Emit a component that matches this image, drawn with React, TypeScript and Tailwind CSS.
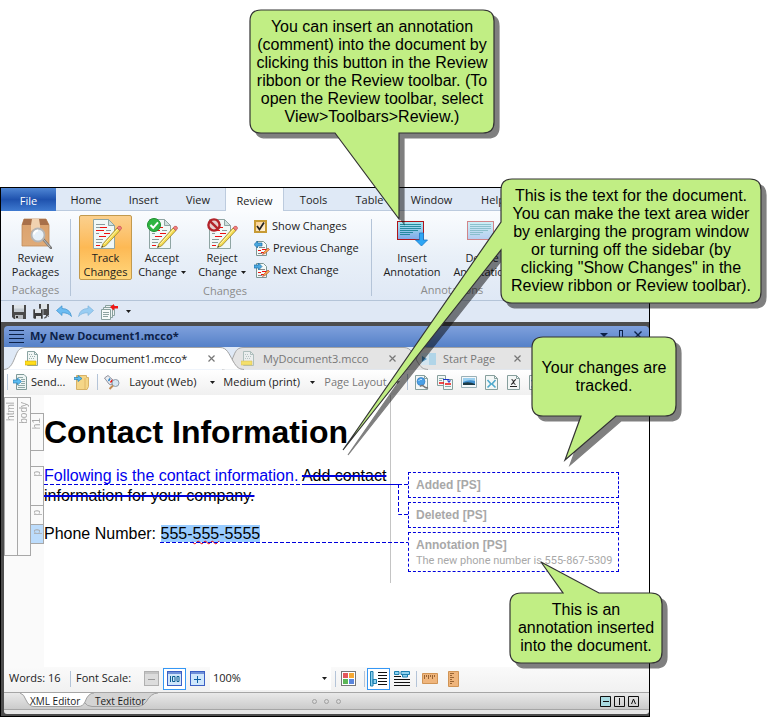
import React from "react";

type Kids = { children?: React.ReactNode };

const ui = "font-['Open_Sans','Noto_Sans',sans-serif]";
const arial = "font-['Liberation_Sans',Arial,sans-serif]";

/* ---------- icons ---------- */

function Caret({ className = "" }: { className?: string }) {
  return (
    <svg width="5" height="3" viewBox="0 0 5 3" className={className} aria-hidden="true">
      <path d="M0 0H5L2.5 3Z" fill="currentColor" />
    </svg>
  );
}

function PackageIcon() {
  return (
    <svg width="32" height="32" viewBox="0 0 32 32" aria-hidden="true">
      <defs>
        <linearGradient id="box" x1="0" y1="0" x2="0" y2="1">
          <stop offset="0" stopColor="#d9a06c" />
          <stop offset="1" stopColor="#e0ab78" />
        </linearGradient>
      </defs>
      <path d="M4 2H26L29 8V29H2V8Z" fill="url(#box)" stroke="#c08a58" strokeWidth=".8" />
      <path d="M4 2H26L29 8H2Z" fill="#a8704a" />
      <path d="M12 2H19L20 8V14L18 12.500L15.500 14L13 12.500L11 14V8Z" fill="#f1d2b0" />
      <path d="M23 22L31 31" stroke="#777" strokeWidth="2.600" strokeLinecap="round" />
      <path d="M23 22L30 30" stroke="#c4c4c4" strokeWidth="1" strokeLinecap="round" />
      <circle cx="18" cy="18" r="6.500" fill="#e6f0f9" stroke="#b4b4b4" strokeWidth="1.800" />
      <path d="M14 17.500A4.500 4.500 0 0 1 18 13.500" fill="none" stroke="#fff" strokeWidth="2" />
    </svg>
  );
}

function EditPage({ badge }: { badge?: "ok" | "no" }) {
  return (
    <svg width="32" height="32" viewBox="0 0 32 32" aria-hidden="true">
      <path d="M3.500 2.500H18.500L24.500 8.500V31.500H3.500Z" fill="#f1f8f7" stroke="#8fa5a3" />
      <path d="M18.500 2.500V8.500H24.500Z" fill="#cfe0de" stroke="#8fa5a3" />
      <path d="M6 7.500H15M6 10.500H12M16 13.500H21M6 16.500H9M6 22.500H13M6 25.500H12" stroke="#8b9a9a" />
      <path d="M6 13.500H14M14 16.500H20M10 10.500H17M6 28.500H10M9 19.500H16" stroke="#ee1010" strokeWidth="1.200" />
      <path d="M11.500 30.500L13 26.800L27 11L30 13.500L15.500 29Z" fill="#f5dc4e" stroke="#8a7424" strokeWidth=".7" />
      <path d="M14.300 27L28 12" stroke="#fff6b8" strokeWidth="1" />
      <path d="M27 11L28.500 9.300Q31 8.500 31.700 11.200L30 13.500Z" fill="#f08080" stroke="#b44" strokeWidth=".6" />
      <path d="M11.500 30.500L12.100 28.800L13.200 29.800Z" fill="#333" />
      {badge === "ok" && (
        <g>
          <circle cx="8" cy="8" r="6.500" fill="#2fb541" stroke="#1a8f2d" />
          <path d="M4.500 8L7.200 10.800L12 5.300" fill="none" stroke="#fff" strokeWidth="2" />
        </g>
      )}
      {badge === "no" && (
        <g>
          <circle cx="8" cy="8" r="5.600" fill="#e6cdcd" stroke="#b3232a" strokeWidth="2.400" />
          <path d="M4 4.200L12 11.800" stroke="#b3232a" strokeWidth="2.400" />
        </g>
      )}
    </svg>
  );
}

function SmallChange({ next = false }: { next?: boolean }) {
  return (
    <svg width="16" height="16" viewBox="0 0 16 16" aria-hidden="true">
      <path d="M2.500 1.500H9.500L12.500 4.500V15.500H2.500Z" fill="#f4f9f8" stroke="#7c9593" />
      <path d="M5 7.500H11M4 13.500H8" stroke="#888" />
      <path d="M4 10.500H7M8 9.500H12M7 12.500H10" stroke="#e11" strokeWidth="1.200" />
      <path d="M8.500 14.500L9.500 12.500L14 8L15.500 9.500L11 13.500Z" fill="#f3b04a" stroke="#b8342a" strokeWidth=".6" />
      <path
        d={next ? "M8 4.500L4.500 1V3H0V6H4.500V8Z" : "M0 4.500L3.500 1V3H8V6H3.500V8Z"}
        fill="#4aa8e0"
        stroke="#1b6fa8"
        strokeWidth=".7"
      />
    </svg>
  );
}

function AnnotationIcon({ faded = false }: { faded?: boolean }) {
  return (
    <svg width="32" height="32" viewBox="0 0 32 32" className={faded ? "opacity-50" : ""} aria-hidden="true">
      <defs>
        <linearGradient id="note" x1="0" y1="0" x2="0" y2="1">
          <stop offset="0" stopColor="#a8e8f2" />
          <stop offset="1" stopColor="#7fa8e8" />
        </linearGradient>
      </defs>
      <rect x="1.500" y="4.500" width="26" height="18" fill="url(#note)" stroke="#b0141a" />
      <path d="M4 7.500H25M4 9.500H25M4 11.500H25M4 13.500H22M4 15.500H17M4 17.500H14" stroke="#1b8296" strokeWidth=".9" />
      {!faded && <path d="M23.500 16H27.500V23H31.500L25.500 29L19.500 23H23.500Z" fill="#2ea6f5" stroke="#1b78c8" strokeWidth=".8" />}
    </svg>
  );
}

function Floppy() {
  return (
    <svg width="14" height="14" viewBox="0 0 14 14" aria-hidden="true">
      <path d="M0 0H14V14H2L0 12Z" fill="#4a4a4a" />
      <path d="M2 0H12V7H2Z" fill="#dfe4e8" />
      <path d="M2 3.500H12V7H2Z" fill="#c3cad0" />
      <path d="M3 10H11V14H3Z" fill="#b8bcc0" />
      <path d="M4 11H6V13H4Z" fill="#333" />
    </svg>
  );
}

function FloppyStack() {
  return (
    <svg width="17" height="16" viewBox="0 0 17 16" aria-hidden="true">
      <path d="M6 0H16V11H6Z" fill="#4a4a4a" />
      <path d="M8 0H14V5H8Z" fill="#dfe4e8" />
      <path d="M0 5H10V15H1L0 14Z" fill="#3c3c3c" stroke="#dfe9f5" strokeWidth=".6" />
      <path d="M2 5H8V9H2ZM3 12H8V15H3Z" fill="#dfe4e8" />
      <path d="M11 14Q14 14 14 12M12.500 12.500L14 11L16 12.500" fill="none" stroke="#444" />
    </svg>
  );
}

function Arrow({ flip = false }: { flip?: boolean }) {
  return (
    <svg width="16" height="13" viewBox="0 0 16 13" className={flip ? "-scale-x-100 opacity-60" : ""} aria-hidden="true">
      <path d="M0.500 5.500L6 0.800V3.500Q14 3.500 15.500 11.500Q12 7.500 6 7.800V10.500Z" fill="#6cbcf2" stroke="#3b8fcc" strokeWidth=".7" />
    </svg>
  );
}

function TransferIcon() {
  return (
    <svg width="17" height="16" viewBox="0 0 17 16" aria-hidden="true">
      <path d="M4.500 1.500H13.500V11.500H4.500Z" fill="#eef3f3" stroke="#8aa19f" />
      <path d="M2.500 3.500H11.500V13.500H2.500Z" fill="#eef3f3" stroke="#8aa19f" />
      <path d="M.5 5.500H9.500V15.500H.5Z" fill="#f7faf9" stroke="#8aa19f" />
      <path d="M2 8.500H8M2 10.500H8M2 12.500H7" stroke="#8fa3a1" />
      <path d="M9 3L13 0V2H17V4.500H13V6.500Z" fill="#f01616" />
    </svg>
  );
}

function DocIcon({ faded = false }: { faded?: boolean }) {
  return (
    <svg width="13" height="16" viewBox="0 0 13 16" className={faded ? "opacity-60" : ""} aria-hidden="true">
      <path d="M2.500 .5H9.500L12.500 3.500V14.500H2.500Z" fill="#f1f6f5" stroke="#8ba5a3" />
      <path d="M9.500 .5V3.500H12.500" fill="none" stroke="#8ba5a3" />
      <path d="M4 3.500H8M5 5.500H11M4 7.500H10" stroke="#9bb0ae" strokeDasharray="1 1" />
      <path d="M0 10H11V14H0Z" fill="#ffdf1b" stroke="#d2a90b" strokeWidth=".6" />
    </svg>
  );
}

function StartIcon() {
  return (
    <svg width="15" height="14" viewBox="0 0 15 14" className="opacity-80" aria-hidden="true">
      <path d="M0 1H15V13H0Z" fill="#a5d2ea" />
      <path d="M0 1H8V13H0Z" fill="#cfe6f3" />
      <path d="M1 4L6 7L1 10Z" fill="#2d7fb8" />
    </svg>
  );
}

function SendIcon() {
  return (
    <svg width="14" height="16" viewBox="0 0 14 16" aria-hidden="true">
      <path d="M3.500 .5H11L13.500 3V15.500H3.500Z" fill="#eef5f4" stroke="#7f9a98" />
      <path d="M5 3.500H10M8 5.500H12M9 7.500H12M8 9.500H12M5 11.500H12M5 13.500H12" stroke="#8fa8a6" />
      <path d="M0 6H4.500V4L8.500 7.500L4.500 11V9H0Z" fill="#5bbcf0" stroke="#2a80b5" strokeWidth=".7" />
    </svg>
  );
}

function FolderIcon() {
  return (
    <svg width="15" height="16" viewBox="0 0 15 16" aria-hidden="true">
      <path d="M2.500 1.500H12.500V3.500H14.500V12.500L13 15.500H2.500Z" fill="#f5d687" stroke="#d8b266" />
      <path d="M11 4V15" stroke="#e0b766" />
      <path d="M0 3.500H4V1.500L8 4.500L4 7.500V5.500H0Z" fill="#5bbcf0" stroke="#2a80b5" strokeWidth=".7" />
    </svg>
  );
}

function InspectIcon() {
  return (
    <svg width="16" height="15" viewBox="0 0 16 15" aria-hidden="true">
      <path d="M.5 3L4 .5L10 6L7 10L5 9Z" fill="#e9eef2" stroke="#667" strokeWidth=".7" />
      <path d="M4.500 6L6 3.500" stroke="#3587c8" strokeWidth="1.500" />
      <path d="M6.500 7.500L8.500 5" stroke="#e11" strokeWidth="1.500" />
      <circle cx="11.500" cy="8" r="3.500" fill="#d6e6f2" stroke="#8d9aa8" />
      <path d="M9 10.500L5.500 14" stroke="#c08a52" strokeWidth="2" />
    </svg>
  );
}

function PageTool({ kind }: { kind: "link" | "copy" | "picture" | "cut" | "variable" }) {
  if (kind === "picture")
    return (
      <svg width="16" height="12" viewBox="0 0 16 12" aria-hidden="true">
        <path d="M.5 .5H15.500V11.500H.5Z" fill="#f4f8fa" stroke="#9ab0b6" />
        <path d="M2 2H14V8H2Z" fill="#3f8fd0" />
        <path d="M2 2H14V5Q8 3 2 6Z" fill="#9cd0ef" />
        <path d="M2 8V7Q8 5 14 8V9H2Z" fill="#1d3a45" />
      </svg>
    );
  if (kind === "copy")
    return (
      <svg width="16" height="15" viewBox="0 0 16 15" aria-hidden="true">
        <path d="M.5 .5H8.500V10.500H.5Z" fill="#f3f7f6" stroke="#869f9d" />
        <path d="M6.500 4.500H15.500V14.500H6.500Z" fill="#f3f7f6" stroke="#869f9d" />
        <path d="M2 3.500H7M2 5.500H5M8 11.500H14" stroke="#8aa" />
        <path d="M2 8H7M8 9H14" stroke="#e11" strokeWidth="1.600" />
        <path d="M6 4.500H12V7M10.500 5.500L12 7.500L13.500 5.500" fill="none" stroke="#1833c8" />
      </svg>
    );
  return (
    <svg width="14" height="15" viewBox="0 0 14 15" aria-hidden="true">
      <path d="M.5 .5H9.500L12.500 3.500V14.500H.5Z" fill="#f3f7f6" stroke="#869f9d" />
      <path d="M9.500 .5V3.500H12.500" fill="none" stroke="#869f9d" />
      {kind === "link" && (
        <g>
          <circle cx="6" cy="6.500" r="4" fill="#4aa0e6" stroke="#2c72b8" strokeWidth=".6" />
          <path d="M3.500 6Q5 3.500 7 4.500" stroke="#c4e8ff" fill="none" />
          <path d="M5 11.500Q7 9.500 9 11.500T13 12.500" fill="none" stroke="#777" strokeWidth="1.600" />
        </g>
      )}
      {kind === "cut" && <path d="M2.500 5L6 9L2.500 12.500M10.500 5L7 9L10.500 12.500M5 9H8" fill="none" stroke="#4fa9cc" strokeWidth="1.600" />}
      {kind === "variable" && (
        <path d="M4.500 4.500Q6 4.500 6.500 7T8.500 9.500M9 4.500Q7.500 5 6.500 7T4 9.500M3 11.500H10" fill="none" stroke="#222" strokeWidth="1.100" />
      )}
    </svg>
  );
}

function ScaleIcon({ kind }: { kind: "minus" | "full" | "plus" }) {
  const off = kind === "minus";
  return (
    <svg width="15" height="15" viewBox="0 0 15 15" aria-hidden="true">
      <rect x=".5" y=".5" width="14" height="14" fill={off ? "#dcdcdc" : "#cfe6fb"} stroke={off ? "#b0b0b0" : "#3b5fc4"} />
      <path d="M1 1H14V3H1Z" fill={off ? "#c4c4c4" : "#6f90d8"} />
      {kind !== "full" && <path d="M4 8.500H11" stroke={off ? "#999" : "#0e5fa0"} />}
      {kind === "plus" && <path d="M7.500 5V12" stroke="#0e5fa0" />}
      {kind === "full" && <path d="M3.500 5V11M5.500 5.500H8V10.500H5.500ZM10 5.500H12V10.500H10Z" fill="none" stroke="#0e5f90" />}
    </svg>
  );
}

function GridIcon() {
  return (
    <svg width="15" height="15" viewBox="0 0 15 15" aria-hidden="true">
      <rect x=".5" y=".5" width="14" height="14" fill="#fff" stroke="#777" />
      <path d="M2 2H7V7H2Z" fill="#e4575b" />
      <path d="M8 2H13V7H8Z" fill="#f6a832" />
      <path d="M2 8H7V13H2Z" fill="#5cb656" />
      <path d="M8 8H13V13H8Z" fill="#5a86dd" />
    </svg>
  );
}

function BlockBars({ side = false }: { side?: boolean }) {
  return side ? (
    <svg width="17" height="16" viewBox="0 0 17 16" aria-hidden="true">
      <path d="M.5 .5H3V15H.5ZM3 8.500H6.500V12.500H3Z" fill="#8fd2ee" stroke="#1d7fae" />
      <path d="M8 1.500H17M8 4.500H17M8 7.500H17M8 10.500H17M8 13.500H17" stroke="#111" />
    </svg>
  ) : (
    <svg width="16" height="16" viewBox="0 0 16 16" aria-hidden="true">
      <path d="M.5 .5H5V3.500H.5ZM7 .5H15.500V3.500H7ZM8.500 3.500H13.500V6H8.500Z" fill="#8fd2ee" stroke="#1d7fae" />
      <path d="M0 5.500H7M0 8.500H16M0 11.500H16M0 14.500H16" stroke="#111" />
    </svg>
  );
}

function Ruler({ tall = false }: { tall?: boolean }) {
  return tall ? (
    <svg width="11" height="16" viewBox="0 0 11 16" aria-hidden="true">
      <path d="M.5 .5H10.500V15.500H.5Z" fill="#efb57c" stroke="#d09455" />
      <path d="M2 2.500H6M2 4.500H4M2 6.500H6M2 8.500H4M2 10.500H6M2 12.500H4" stroke="#8f5a2a" strokeWidth=".9" />
    </svg>
  ) : (
    <svg width="16" height="11" viewBox="0 0 16 11" aria-hidden="true">
      <path d="M.5 .5H15.500V10.500H.5Z" fill="#efb57c" stroke="#d09455" />
      <path d="M2.500 2V6M4.500 2V4M6.500 2V6M8.500 2V4M10.500 2V6M12.500 2V4" stroke="#8f5a2a" strokeWidth=".9" />
    </svg>
  );
}

/* ---------- ribbon ---------- */

function BigButton({ icon, top, bottom, menu, className = "" }: { icon: React.ReactNode; top: string; bottom: string; menu?: boolean; className?: string }) {
  return (
    <button className={`flex h-[65px] shrink-0 flex-col items-center border pt-[1px] leading-[14px] ${className}`}>
      {icon}
      <span className="mt-[2px]">{top}</span>
      <span className="flex items-center gap-1 whitespace-nowrap">
        {bottom}
        {menu && <Caret className="mt-px" />}
      </span>
    </button>
  );
}

function Group({ label, children, className = "" }: Kids & { label: string; className?: string }) {
  return (
    <section className={`flex shrink-0 flex-col ${className}`}>
      <div className="flex">{children}</div>
      <h2 className="mt-[2px] text-center leading-[16px] text-[#8b8b8b]">{label}</h2>
    </section>
  );
}

function Rule({ className = "" }: { className?: string }) {
  return <span className={`w-px shrink-0 bg-[#b4c4d8] ${className}`} />;
}

function Ribbon() {
  return (
    <div className="flex h-[90px] overflow-hidden border-b border-[#b4c4d8] bg-linear-to-b from-[#fafcfe] via-[#e9f0f8] to-[#dfe8f5] pt-[4px]">
      <Group label="Packages" className="w-[69px]">
        <BigButton icon={<PackageIcon />} top="Review" bottom="Packages" className="w-full border-transparent" />
      </Group>
      <Rule className="my-[4px]" />
      <Group label="Changes" className="ml-2 w-[292px]">
        <BigButton
          icon={<EditPage />}
          top="Track"
          bottom="Changes"
          className="w-[53px] rounded-[2px] border-[#c29a4e] bg-linear-to-b from-[#fbd08d] via-[#fdb954] to-[#ffd77c]"
        />
        <BigButton icon={<EditPage badge="ok" />} top="Accept" bottom="Change" menu className="w-[60px] border-transparent" />
        <BigButton icon={<EditPage badge="no" />} top="Reject" bottom="Change" menu className="w-[60px] border-transparent" />
        <div className="ml-[2px] flex flex-col">
          <label className="flex h-[22px] items-center gap-[5px]">
            <span className="relative size-[13px]">
              <input
                type="checkbox"
                defaultChecked
                className="block size-[13px] appearance-none border-2 border-[#c79b35] bg-linear-to-br from-[#f8cf8f] to-[#fff3dc]"
              />
              <svg viewBox="0 0 13 13" className="pointer-events-none absolute inset-0 size-[13px]" aria-hidden="true">
                <path d="M3 6L5.500 9.500L10 2.500" fill="none" stroke="#222" strokeWidth="1.700" />
              </svg>
            </span>
            Show Changes
          </label>
          <button className="flex h-[22px] items-center gap-[3px] whitespace-nowrap">
            <SmallChange />
            Previous Change
          </button>
          <button className="flex h-[22px] items-center gap-[3px] whitespace-nowrap">
            <SmallChange next />
            Next Change
          </button>
        </div>
      </Group>
      <Rule className="my-[4px]" />
      <Group label="Annotations" className="ml-[5px] w-[150px]">
        <BigButton icon={<AnnotationIcon />} top="Insert" bottom="Annotation" className="w-[70px] border-transparent" />
        <BigButton icon={<AnnotationIcon faded />} top="Delete" bottom="Annotation" className="w-[70px] border-transparent" />
      </Group>
    </div>
  );
}

const menus = [
  { name: "Home", width: "w-[60px]" },
  { name: "Insert", width: "w-[55px]" },
  { name: "View", width: "w-[54px]" },
  { name: "Review", width: "w-[59px]" },
  { name: "Tools", width: "w-[59px]" },
  { name: "Table", width: "w-[53px]" },
  { name: "Window", width: "w-[71px]" },
  { name: "Help", width: "w-[52px]" },
];

function MenuTabs() {
  return (
    <nav className="flex h-[23px] overflow-hidden bg-[#dfe9f6]">
      <button className="w-[55px] shrink-0 bg-linear-to-b from-[#4f86d4] via-[#1f52ae] to-[#3f7ad0] pt-[3px] text-white">File</button>
      {menus.map((m) => (
        <button
          key={m.name}
          className={`shrink-0 pt-[3px] ${m.width} ${
            m.name === "Review" ? "border-x border-[#bccbde] bg-[#fafcfe]" : "border-b border-[#bccbde]"
          }`}
        >
          {m.name}
        </button>
      ))}
      <span className="flex-1 border-b border-[#bccbde]" />
    </nav>
  );
}

function QuickAccess() {
  return (
    <div className="flex h-[21px] items-center bg-[#dfe8f5] pl-[11px]">
      <button aria-label="Save"><Floppy /></button>
      <button aria-label="Save all" className="ml-[7px]"><FloppyStack /></button>
      <button aria-label="Undo" className="ml-[6px]"><Arrow /></button>
      <button aria-label="Redo" className="ml-[6px]"><Arrow flip /></button>
      <button aria-label="Transfer" className="ml-[7px]"><TransferIcon /></button>
      <button aria-label="More" className="ml-[8px]"><Caret /></button>
    </div>
  );
}

/* ---------- document window ---------- */

function TabShape({ width, fill }: { width: number; fill: string }) {
  const w = width;
  return (
    <svg width={w} height="23" viewBox={`0 0 ${w} 23`} className="absolute inset-0" aria-hidden="true">
      <path
        d={`M0 22.500C7 22 9 15 12 8C14 3 16 .5 22 .5H${w - 24}C${w - 17} .5 ${w - 15} 7 ${w - 11} 14C${w - 7} 21 ${w - 5} 22 ${w} 22.500`}
        fill={fill}
        stroke="#a3a3a3"
      />
    </svg>
  );
}

function DocTabs() {
  return (
    <div className="flex h-[23px] overflow-hidden bg-[#dfe9f6]" role="tablist">
      <div className="relative z-30 flex w-[240px] shrink-0 items-center pl-[21px]">
        <TabShape width={240} fill="#ffffff" />
        <span className="relative"><DocIcon /></span>
        <button role="tab" aria-selected="true" className="relative ml-[9px] w-[161px] pt-px text-left">My New Document1.mcco*</button>
        <button aria-label="Close My New Document1.mcco" className="relative leading-none"><CloseMark /></button>
      </div>
      <div className="relative z-20 -ml-[22px] flex w-[206px] shrink-0 items-center pl-[19px] text-[#777]">
        <TabShape width={206} fill="#e4e4e4" />
        <span className="relative"><DocIcon faded /></span>
        <button role="tab" aria-selected="false" className="relative ml-[9px] w-[126px] pt-px text-left">MyDocument3.mcco</button>
        <button aria-label="Close MyDocument3.mcco" className="relative"><CloseMark /></button>
      </div>
      <div className="relative z-10 -ml-[22px] flex w-[149px] shrink-0 items-center pl-[15px] text-[#777]">
        <TabShape width={149} fill="#e4e4e4" />
        <span className="relative"><StartIcon /></span>
        <button role="tab" aria-selected="false" className="relative ml-[7px] w-[71px] pt-px text-left">Start Page</button>
        <button aria-label="Close Start Page" className="relative"><CloseMark /></button>
      </div>
    </div>
  );
}

function CloseMark() {
  return (
    <svg width="7" height="7" viewBox="0 0 7 7" aria-hidden="true">
      <path d="M.5 .5L6.500 6.500M6.500 .5L.5 6.500" stroke="#777" strokeWidth="1.200" />
    </svg>
  );
}

function Pick({ label, value, width }: { label: string; value: string; width: string }) {
  return (
    <label className={`relative flex h-5 shrink-0 items-center ${width}`}>
      <select aria-label={label} className="w-full appearance-none bg-transparent">
        <option>{value}</option>
      </select>
      <Caret className="pointer-events-none absolute right-0" />
    </label>
  );
}

function DocToolbar() {
  return (
    <div className="flex h-[25px] items-center overflow-hidden bg-linear-to-b from-white to-[#f0f0f0] pb-px pl-[3px]">
      <Rule className="h-4" />
      <button className="ml-[5px] flex items-center gap-[4px]"><SendIcon />Send...</button>
      <button aria-label="Open folder" className="ml-[9px]"><FolderIcon /></button>
      <Rule className="ml-[8px] h-4" />
      <button aria-label="Inspect" className="ml-[6px]"><InspectIcon /></button>
      <span className="ml-[9px] flex"><Pick label="Layout" value="Layout (Web)" width="w-[86px]" /></span>
      <span className="ml-[8px] flex"><Pick label="Medium" value="Medium (print)" width="w-[92px]" /></span>
      <span className="ml-[9px] flex text-[#777]"><Pick label="Page layout" value="Page Layout" width="w-[76px]" /></span>
      <Rule className="ml-[7px] h-4" />
      <span className="ml-[7px] flex shrink-0 items-center gap-[8px]">
        <button aria-label="Insert link"><PageTool kind="link" /></button>
        <button aria-label="Insert copy"><PageTool kind="copy" /></button>
        <button aria-label="Insert picture"><PageTool kind="picture" /></button>
        <button aria-label="Cut"><PageTool kind="cut" /></button>
        <button aria-label="Insert variable"><PageTool kind="variable" /></button>
        <button aria-label="Insert page"><PageTool kind="cut" /></button>
      </span>
    </div>
  );
}

function Tag({ children, className = "" }: Kids & { className?: string }) {
  return (
    <span className={`flex w-[14px] items-start justify-center border border-[#a8a8a8] pt-[4px] text-[10px] leading-[12px] text-[#a8a8a8] ${className}`}>
      <span className="rotate-180 [writing-mode:vertical-rl]">{children}</span>
    </span>
  );
}

function Note({ title, children, className = "" }: Kids & { title: string; className?: string }) {
  return (
    <div className={`border border-dashed border-[#0000dd] px-[7px] pt-[5px] text-[12px] leading-[15px] text-[#a8a8a8] ${className}`}>
      <h3 className="font-bold">{title}</h3>
      {children}
    </div>
  );
}

function Editor() {
  return (
    <div className={`relative flex h-[272px] bg-white text-[16px] text-black ${arial}`}>
      <div className="flex w-[40px] shrink-0 items-start bg-[#fafafa] pt-[2px]">
        <Tag className="h-[159px]">html</Tag>
        <Tag className="-ml-px h-[159px]">body</Tag>
        <div className="-ml-px flex flex-col pt-[16px]">
          <Tag className="h-[38px]">h1</Tag>
          <Tag className="mt-[15px] h-[40px]">p</Tag>
          <Tag className="-mt-px h-[20px]">p</Tag>
          <Tag className="-mt-px h-[20px] bg-[#bcdcfc] text-[#445]">p</Tag>
        </div>
      </div>
      <article className="h-[188px] w-[347px] shrink-0 border-r border-[#c4c4c4] pt-[18px]">
        <h1 className="text-[32px] leading-[38px] font-bold whitespace-nowrap">Contact Information</h1>
        <p className="mt-[15px] leading-[20px]">
          <ins className="text-[#0000ee] no-underline">Following is the contact information.</ins>{" "}
          <del className="decoration-[#0000dd] decoration-2">Add contact information for your company.</del>
        </p>
        <p className="mt-[18px] leading-[20px]">
          Phone Number:{" "}
          <mark className="bg-[#99ccff] text-black">
            555-<span className="underline decoration-red-600 decoration-wavy decoration-1">555</span>-5555
          </mark>
        </p>
      </article>
      <aside className="ml-[17px] flex w-[211px] shrink-0 flex-col gap-[4px] pt-[77px]">
        <Note title="Added [PS]" className="h-[26px]" />
        <Note title="Deleted [PS]" className="h-[26px]" />
        <Note title="Annotation [PS]" className="h-[40px]">
          <p className="font-['Roboto',sans-serif] text-[11px] whitespace-nowrap">The new phone number is 555-867-5309</p>
        </Note>
      </aside>
      <svg width="410" height="200" viewBox="0 0 410 200" className="pointer-events-none absolute top-0 left-0" aria-hidden="true">
        <g fill="none" stroke="#0000dd" strokeDasharray="4 2">
          <path d="M40 89.500H404" />
          <path d="M394.500 89V119.500H404" />
          <path d="M156 147.500H404" />
        </g>
        <path d="M298 89.500H394" stroke="#0000dd" />
      </svg>
    </div>
  );
}

function StatusBar() {
  return (
    <div className="flex h-[25px] items-center bg-linear-to-b from-[#fafafa] to-[#f1f1f1] pb-[2px] pl-[5px]">
      <span className="w-[61px] shrink-0">Words: 16</span>
      <Rule className="h-4" />
      <span className="ml-[5px] w-[68px] shrink-0">Font Scale:</span>
      <button aria-label="Smaller"><ScaleIcon kind="minus" /></button>
      <button aria-label="Actual size" className="ml-1 flex h-[22px] w-[23px] items-center justify-center border border-[#3597f5] bg-white">
        <ScaleIcon kind="full" />
      </button>
      <button aria-label="Larger" className="ml-1"><ScaleIcon kind="plus" /></button>
      <label className="relative ml-[5px] flex h-[23px] w-[121px] items-center bg-white">
        <select aria-label="Zoom" defaultValue="100%" className="w-full appearance-none bg-transparent pl-[3px]">
          <option>100%</option>
        </select>
        <Caret className="pointer-events-none absolute right-[4px]" />
      </label>
      <Rule className="ml-[4px] h-4" />
      <button aria-label="Palette" className="ml-[5px]"><GridIcon /></button>
      <Rule className="ml-[8px] h-4" />
      <button aria-label="Side bars" className="ml-[2px] flex h-[22px] w-[23px] items-center justify-center border border-[#3597f5] bg-white">
        <BlockBars side />
      </button>
      <button aria-label="Top bars" className="ml-[4px]"><BlockBars /></button>
      <Rule className="ml-[6px] h-4" />
      <button aria-label="Horizontal ruler" className="ml-[5px]"><Ruler /></button>
      <button aria-label="Vertical ruler" className="ml-[10px]"><Ruler tall /></button>
    </div>
  );
}

function BottomTabs() {
  return (
    <div className="relative flex h-[18px] items-center border-y border-[#a5a5a5] bg-linear-to-b from-[#e9e9e9] to-[#cbcbcb] text-[10px]">
      <svg width="160" height="16" viewBox="0 0 160 16" className="absolute top-0 left-0" aria-hidden="true">
        <path d="M78 0L80 9Q83 13.500 88 13.500H134Q139 13.500 142 9Q147 0 154 0" fill="#d4d4d4" stroke="#a0a0a0" />
        <path d="M16 0Q20 1 22 7Q25 13.500 30 13.500H74Q79 13.500 81 9Q84 0 90 0" fill="#fff" stroke="#a0a0a0" />
      </svg>
      <button className="relative ml-[26px] w-[65px] text-left whitespace-nowrap">XML Editor</button>
      <button className="relative w-[60px] text-left whitespace-nowrap">Text Editor</button>
      <span className="ml-[157px] flex gap-[7px]">
        {[0, 1, 2].map((i) => (
          <span key={i} className="size-[5px] rounded-full border border-[#a0a0a0]" />
        ))}
      </span>
      <span className="mr-[10px] ml-auto flex gap-[3px]">
        {["M3 5.500H9", "M5.500 2V9", "M3.500 8L5.500 3L7.500 8"].map((d, i) => (
          <button key={d} aria-label={`Split ${i + 1}`} className={i === 0 ? "bg-[#a9dbe2]" : ""}>
            <svg width="11" height="11" viewBox="0 0 11 11" aria-hidden="true">
              <path d="M.5 .5H10.500V10.500H.5Z" fill="none" stroke="#111" />
              <path d={d} fill="none" stroke="#111" />
            </svg>
          </button>
        ))}
      </span>
    </div>
  );
}

function TitleBar() {
  return (
    <div className="flex h-[21px] items-center rounded-t-[4px] bg-linear-to-b from-[#7fa0dc] to-[#5581c8] pr-[7px] pl-[5px] text-[#0c2148]">
      <svg width="15" height="14" viewBox="0 0 15 14" aria-hidden="true">
        <path d="M0 .5H15M0 4.500H15M0 8.500H15M0 12.500H15" stroke="#0c2148" />
      </svg>
      <h1 className="ml-[6px] font-bold">My New Document1.mcco*</h1>
      <span className="mb-[3px] ml-auto flex items-center gap-[9px]">
        <svg width="8" height="4" viewBox="0 0 8 4" aria-hidden="true"><path d="M0 0H8L4 4Z" fill="currentColor" /></svg>
        <svg width="8" height="10" viewBox="0 0 8 10" aria-hidden="true"><path d="M2.500 0V7M5.500 0V7M2 .5H6M0 7.500H8M4 7V10" fill="none" stroke="currentColor" /></svg>
        <svg width="8" height="8" viewBox="0 0 8 8" aria-hidden="true"><path d="M.5 .5L7.500 7.500M7.500 .5L.5 7.500" stroke="currentColor" strokeWidth="1.400" /></svg>
      </span>
    </div>
  );
}

/* ---------- callouts ---------- */

function Callout({ path, width, height, place, children }: Kids & { path: string; width: number; height: number; place: string }) {
  return (
    <div className={`absolute z-40 flex items-center justify-center text-center text-[16px] leading-[18px] whitespace-pre text-black ${arial} ${place}`}>
      <svg
        width={width}
        height={height}
        viewBox={`0 0 ${width} ${height}`}
        className="absolute top-0 left-0 overflow-visible drop-shadow-[5px_5px_0_rgba(0,0,0,0.5)]"
        aria-hidden="true"
      >
        <path d={path} fill="#c1ee84" stroke="#333" strokeWidth="1.200" />
      </svg>
      <p className="relative">{children}</p>
    </div>
  );
}

export default function App() {
  return (
    <main className={`relative bg-white pt-[187px] pr-[126px] text-[11px] text-[#1c1c1c] ${ui}`}>
      <div className="border border-black">
        <MenuTabs />
        <Ribbon />
        <QuickAccess />
        <div className="border-t-4 border-b-2 border-l-[3px] border-[#4d4d4d] bg-[#4d4d4d]">
          <TitleBar />
          <DocTabs />
          <DocToolbar />
          <Editor />
          <StatusBar />
          <BottomTabs />
          <div className="h-[4px] rounded-b-[3px] bg-[#e6e6e6]" />
        </div>
      </div>

      <Callout
        place="top-[10px] left-[250px] h-[123px] w-[244px]"
        width={244}
        height={123}
        path="M11 0H233Q244 0 244 11V112Q244 123 233 123H149V209L85 123H11Q0 123 0 112V11Q0 0 11 0Z"
      >
        {"You can insert an annotation\n(comment) into the document by\nclicking this button in the Review\nribbon or the Review toolbar. (To\nopen the Review toolbar, select\nView>Toolbars>Review.)"}
      </Callout>
      <Callout
        place="top-[179px] left-[501px] h-[124px] w-[260px]"
        width={260}
        height={124}
        path="M11 0H249Q260 0 260 11V113Q260 124 249 124H11Q0 124 0 113V71L-158 271L0 43V11Q0 0 11 0Z"
      >
        {"This is the text for the document.\nYou can make the text area wider\nby enlarging the program window\nor turning off the sidebar (by\nclicking \"Show Changes\" in the\nReview ribbon or Review toolbar)."}
      </Callout>
      <Callout
        place="top-[337px] left-[532px] h-[79px] w-[144px]"
        width={144}
        height={79}
        path="M11 0H133Q144 0 144 11V68Q144 79 133 79H84L33 123L49 79H11Q0 79 0 68V11Q0 0 11 0Z"
      >
        {"Your changes are\ntracked."}
      </Callout>
      <Callout
        place="top-[593px] left-[510px] h-[70px] w-[152px]"
        width={152}
        height={70}
        path="M11 0H53L31 -31L89 0H141Q152 0 152 11V59Q152 70 141 70H11Q0 70 0 59V11Q0 0 11 0Z"
      >
        {"This is an\nannotation inserted\ninto the document."}
      </Callout>
    </main>
  );
}
